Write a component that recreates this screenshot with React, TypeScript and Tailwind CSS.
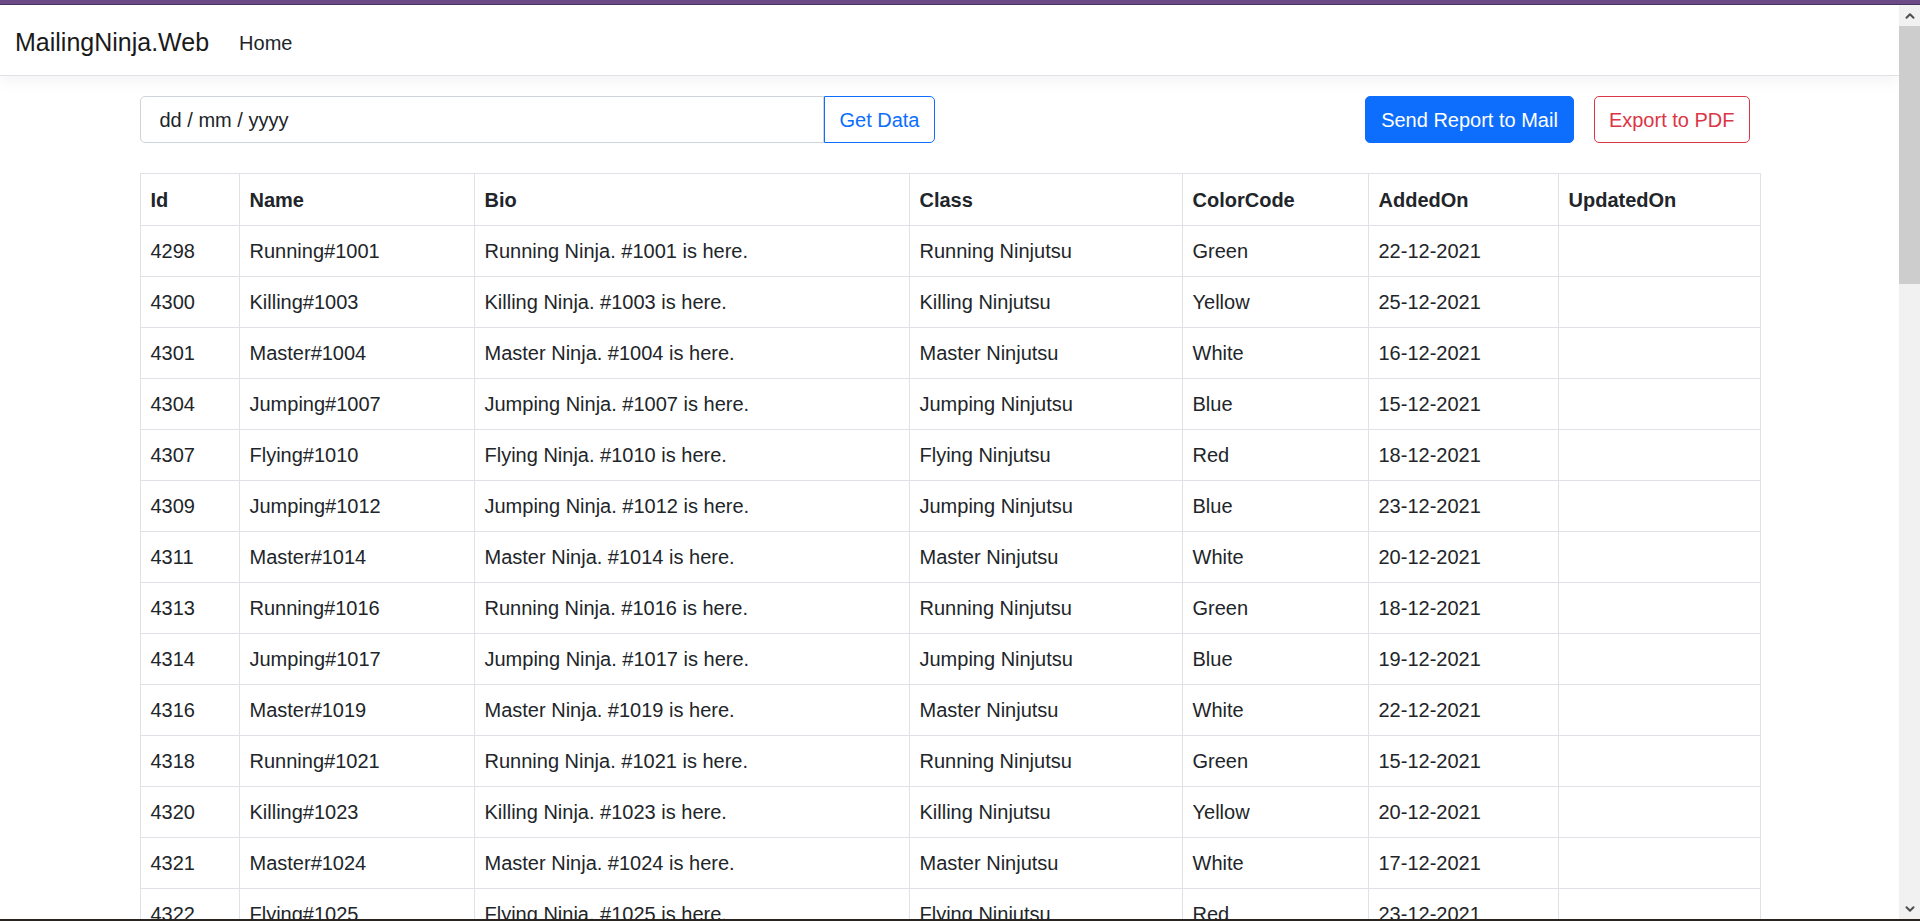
import { ChevronDown, ChevronUp } from 'lucide-react'

const columns = [
  { title: 'Id', width: 'w-[99px]' },
  { title: 'Name', width: 'w-[235px]' },
  { title: 'Bio', width: 'w-[435px]' },
  { title: 'Class', width: 'w-[273px]' },
  { title: 'ColorCode', width: 'w-[186px]' },
  { title: 'AddedOn', width: 'w-[190px]' },
  { title: 'UpdatedOn', width: 'w-[202px]' }
]

const ninjas = [
  { id: 4298, kind: 'Running', no: 1001, color: 'Green', added: '22-12-2021' },
  { id: 4300, kind: 'Killing', no: 1003, color: 'Yellow', added: '25-12-2021' },
  { id: 4301, kind: 'Master', no: 1004, color: 'White', added: '16-12-2021' },
  { id: 4304, kind: 'Jumping', no: 1007, color: 'Blue', added: '15-12-2021' },
  { id: 4307, kind: 'Flying', no: 1010, color: 'Red', added: '18-12-2021' },
  { id: 4309, kind: 'Jumping', no: 1012, color: 'Blue', added: '23-12-2021' },
  { id: 4311, kind: 'Master', no: 1014, color: 'White', added: '20-12-2021' },
  { id: 4313, kind: 'Running', no: 1016, color: 'Green', added: '18-12-2021' },
  { id: 4314, kind: 'Jumping', no: 1017, color: 'Blue', added: '19-12-2021' },
  { id: 4316, kind: 'Master', no: 1019, color: 'White', added: '22-12-2021' },
  { id: 4318, kind: 'Running', no: 1021, color: 'Green', added: '15-12-2021' },
  { id: 4320, kind: 'Killing', no: 1023, color: 'Yellow', added: '20-12-2021' },
  { id: 4321, kind: 'Master', no: 1024, color: 'White', added: '17-12-2021' },
  { id: 4322, kind: 'Flying', no: 1025, color: 'Red', added: '23-12-2021' },
  { id: 4324, kind: 'Jumping', no: 1027, color: 'Blue', added: '21-12-2021' },
  { id: 4326, kind: 'Master', no: 1029, color: 'White', added: '19-12-2021' }
]

function Navbar() {
  return (
    <nav className="relative z-10 flex items-center h-[71px] px-[15px] pt-[13px] pb-[7px] bg-white border-b border-[#dee2e6] shadow-[0_5px_15px_rgba(0,0,0,0.05)]">
      <span className="text-[25px] leading-[37.5px] mr-[20px] text-[#1a1a1a]">
        MailingNinja.Web
      </span>
      <span className="text-[20px] leading-[30px] px-[10px] text-[#212529]">Home</span>
    </nav>
  )
}

function Toolbar() {
  return (
    <div className="flex items-center justify-between">
      {/* date + get data */}
      <div className="flex w-[795px] h-[47px]">
        <div className="flex-1 flex items-center pl-[19px] border border-[#ced4da] rounded-l-[5px] text-[20px] text-[#212529]">
          dd / mm / yyyy
        </div>
        <button className="px-[14px] border border-[#0d6efd] rounded-r-[5px] text-[20px] text-[#0d6efd] bg-white">
          Get Data
        </button>
      </div>

      {/* actions */}
      <div className="flex gap-[20px] pr-[10px]">
        <button className="h-[47px] px-[15px] rounded-[5px] bg-[#0d6efd] border border-[#0d6efd] text-[20px] text-white">
          Send Report to Mail
        </button>
        <button className="h-[47px] px-[14px] rounded-[5px] bg-white border border-[#dc3545] text-[20px] text-[#dc3545]">
          Export to PDF
        </button>
      </div>
    </div>
  )
}

function NinjaTable() {
  const cell = 'border border-[#dee2e6] px-[10px] py-[10px] leading-[30px] text-left'

  return (
    <table className="w-[1620px] table-fixed border-collapse mt-[30px] text-[20px] text-[#212529]">
      <thead>
        <tr>
          {columns.map((col) => (
            <th key={col.title} className={`${cell} ${col.width} font-bold h-[52px]`}>
              {col.title}
            </th>
          ))}
        </tr>
      </thead>
      <tbody>
        {ninjas.map((n) => (
          <tr key={n.id}>
            <td className={cell}>{n.id}</td>
            <td className={cell}>{n.kind}#{n.no}</td>
            <td className={cell}>{n.kind} Ninja. #{n.no} is here.</td>
            <td className={cell}>{n.kind} Ninjutsu</td>
            <td className={cell}>{n.color}</td>
            <td className={cell}>{n.added}</td>
            <td className={cell}></td>
          </tr>
        ))}
      </tbody>
    </table>
  )
}

function Scrollbar() {
  return (
    <div className="w-[21px] flex flex-col bg-[#f1f1f1]">
      <div className="h-[21px] flex items-center justify-center">
        <ChevronUp className="w-[14px] h-[14px] text-[#505050]" strokeWidth={3.5} />
      </div>
      <div className="h-[258px] bg-[#cdcdcd]" />
      <div className="flex-1" />
      <div className="h-[21px] flex items-center justify-center">
        <ChevronDown className="w-[14px] h-[14px] text-[#505050]" strokeWidth={3.5} />
      </div>
    </div>
  )
}

export default function App() {
  return (
    <div
      className="h-[921px] flex flex-col overflow-hidden bg-white"
      style={{ fontFamily: '"Liberation Sans", Arial, sans-serif' }}
    >
      <div className="h-[5px] bg-[#6b4a86] border-b border-[#4a3260]" />

      <div className="flex-1 flex min-h-0">
        <div className="flex-1 min-w-0 overflow-hidden">
          <Navbar />
          <main className="w-[1620px] mx-auto mt-[20px]">
            <Toolbar />
            <NinjaTable />
          </main>
        </div>
        <Scrollbar />
      </div>

      <div className="h-[2px] bg-[#2a2420]" />
    </div>
  )
}
